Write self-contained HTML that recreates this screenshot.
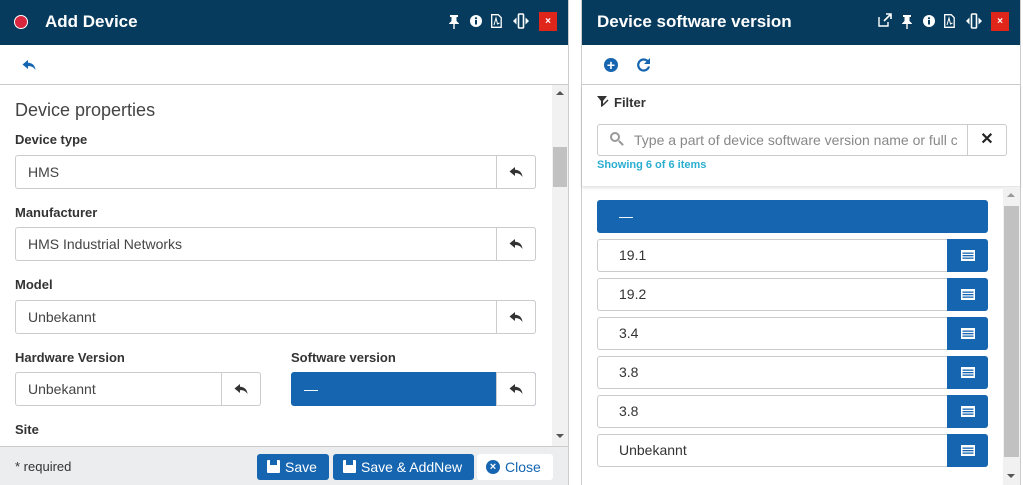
<!DOCTYPE html>
<html><head><meta charset="utf-8"><style>
*{box-sizing:border-box;margin:0;padding:0}
body{width:1023px;height:485px;overflow:hidden;background:#fff;font-family:"Liberation Sans",Arial,sans-serif;position:relative;color:#333}
.a{position:absolute}
.hdr{background:#063b5e;color:#fff;font-weight:bold;font-size:17px}
.lbl{position:absolute;font-size:13px;font-weight:bold;color:#333}
.inp{position:absolute;height:34px;border:1px solid #ccc;border-radius:3px;background:#fff;font-size:14px;color:#444;line-height:32px;padding-left:12px}
.btn{position:absolute;top:-1px;right:-1px;width:40px;height:34px;border:1px solid #ccc;border-radius:0 3px 3px 0;display:flex;align-items:center;justify-content:center;background:#fff}
.li{position:absolute;left:597px;width:391px;height:33px;border:1px solid #ccc;border-radius:3px;font-size:14px;line-height:31px;padding-left:21px;color:#333}
.lb{position:absolute;right:-1px;top:-1px;width:41px;height:33px;background:#1565b0;border-radius:0 3px 3px 0;display:flex;align-items:center;justify-content:center}
</style></head><body>
<svg width="0" height="0" style="position:absolute"><defs>
<symbol id="rep" viewBox="0 0 14 12"><path d="M6 1 L0.5 5.5 L6 10 L6 7.2 C9 7 11.5 8 13.5 11 C13 6.5 10.5 4 6 3.8 Z"/></symbol>
<symbol id="lst" viewBox="0 0 14 11"><rect x="0" y="0" width="14" height="11" fill="#fff"/><rect x="1.5" y="2.5" width="11" height="1.3" fill="#1565b0"/><rect x="1.5" y="5" width="11" height="1.3" fill="#1565b0"/><rect x="1.5" y="7.5" width="11" height="1.3" fill="#1565b0"/></symbol>
<symbol id="pin" viewBox="0 0 10 14"><path d="M1 0h8v2H7.5v4L10 8.5V9H5.7v5h-1.4V9H0v-.5L2.5 6V2H1z" fill="#fff"/></symbol>
<symbol id="info" viewBox="0 0 12 12"><circle cx="6" cy="6" r="6" fill="#fff"/><rect x="5" y="5" width="2" height="4.5" fill="#063b5e"/><circle cx="6" cy="3.2" r="1.1" fill="#063b5e"/></symbol>
<symbol id="pdf" viewBox="0 0 11 14"><path d="M.7.7h6.5l3 3v9.6H.7z" fill="none" stroke="#fff" stroke-width="1.3"/><path d="M3 11l2-7 1.5 6 2-1" fill="none" stroke="#fff" stroke-width="1"/></symbol>
<symbol id="rsz" viewBox="0 0 16 16"><rect x="5.5" y="1" width="5" height="14" rx="1" fill="none" stroke="#fff" stroke-width="1.6"/><path d="M0 8l3.5-3.5v7zM16 8l-3.5-3.5v7z" fill="#fff"/></symbol>
</defs></svg>

<!-- LEFT PANEL -->
<div class="a hdr" style="left:0;top:0;width:568px;height:45px">
 <div class="a" style="left:14px;top:15px;width:14px;height:14px;border-radius:50%;background:#d7263d;border:1.5px solid #fff"></div>
 <div class="a" style="left:45px;top:12px">Add Device</div>
 <svg class="a" style="left:449px;top:15px" width="10" height="14"><use href="#pin"/></svg>
 <svg class="a" style="left:470px;top:15px" width="12" height="12"><use href="#info"/></svg>
 <svg class="a" style="left:491px;top:14px" width="11" height="14"><use href="#pdf"/></svg>
 <svg class="a" style="left:513px;top:13px" width="16" height="16"><use href="#rsz"/></svg>
 <div class="a" style="left:539px;top:12px;width:18px;height:19px;background:#e0261b;font-size:10px;text-align:center;line-height:19px">×</div>
</div>
<div class="a" style="left:0;top:45px;width:568px;height:40px;border-bottom:1px solid #ccc">
 <svg class="a" style="left:22px;top:14px" width="14" height="12" fill="#1565b0"><use href="#rep"/></svg>
</div>
<div class="a" style="left:568px;top:0;width:1px;height:485px;background:#ccc"></div>
<div class="a" style="left:552px;top:85px;width:16px;height:361px;background:#f1f1f1">
 <div class="a" style="left:1px;top:62px;width:14px;height:40px;background:#c1c1c1"></div>
 <div class="a" style="left:4px;top:6px;border:4px solid transparent;border-bottom-color:#555;border-top:0"></div>
 <div class="a" style="left:4px;top:349px;border:4px solid transparent;border-top-color:#555;border-bottom:0"></div>
</div>
<div class="a" style="left:15px;top:100px;font-size:18px;color:#444">Device properties</div>
<div class="lbl" style="left:15px;top:132px">Device type</div>
<div class="inp" style="left:15px;top:155px;width:521px">HMS<div class="btn"><svg width="14" height="12" fill="#333"><use href="#rep"/></svg></div></div>
<div class="lbl" style="left:15px;top:205px">Manufacturer</div>
<div class="inp" style="left:15px;top:227px;width:521px">HMS Industrial Networks<div class="btn"><svg width="14" height="12" fill="#333"><use href="#rep"/></svg></div></div>
<div class="lbl" style="left:15px;top:277px">Model</div>
<div class="inp" style="left:15px;top:300px;width:521px">Unbekannt<div class="btn"><svg width="14" height="12" fill="#333"><use href="#rep"/></svg></div></div>
<div class="lbl" style="left:15px;top:350px">Hardware Version</div>
<div class="inp" style="left:15px;top:372px;width:246px">Unbekannt<div class="btn"><svg width="14" height="12" fill="#333"><use href="#rep"/></svg></div></div>
<div class="lbl" style="left:291px;top:350px">Software version</div>
<div class="inp" style="left:291px;top:372px;width:245px;background:#1565b0;color:#fff;border-color:#1565b0">—<div class="btn" style="border-color:#ccc"><svg width="14" height="12" fill="#333"><use href="#rep"/></svg></div></div>
<div class="lbl" style="left:15px;top:422px">Site</div>
<div class="a" style="left:0;top:446px;width:568px;height:39px;background:#ebedee;border-top:1px solid #ccc">
 <div class="a" style="left:15px;top:12px;font-size:13px;color:#333">* required</div>
 <div class="a" style="left:257px;top:7px;width:72px;height:26px;background:#1565b0;border-radius:3px;color:#fff;font-size:14px;line-height:26px;padding-left:28px">Save<div class="a" style="left:10px;top:6px;width:13px;height:13px;background:#fff;border-radius:1px"><div class="a" style="left:3px;top:0;width:7px;height:5px;background:#1565b0"></div></div></div>
 <div class="a" style="left:333px;top:7px;width:141px;height:26px;background:#1565b0;border-radius:3px;color:#fff;font-size:14px;line-height:26px;padding-left:28px">Save &amp; AddNew<div class="a" style="left:10px;top:6px;width:13px;height:13px;background:#fff;border-radius:1px"><div class="a" style="left:3px;top:0;width:7px;height:5px;background:#1565b0"></div></div></div>
 <div class="a" style="left:477px;top:7px;width:76px;height:26px;background:#fff;border-radius:3px;color:#1565b0;font-size:14px;line-height:26px;padding-left:28px">Close<div class="a" style="left:9px;top:6px;width:14px;height:14px;border-radius:50%;background:#1565b0;color:#fff;font-size:11px;line-height:14px;text-align:center;font-weight:bold;padding:0">×</div></div>
</div>

<!-- RIGHT PANEL -->
<div class="a" style="left:581px;top:0;width:1px;height:485px;background:#ccc"></div>
<div class="a" style="left:1020px;top:0;width:1px;height:485px;background:#ccc"></div>
<div class="a hdr" style="left:582px;top:0;width:438px;height:45px">
 <div class="a" style="left:15px;top:12px">Device software version</div>
 <svg class="a" style="left:296px;top:13px" width="14" height="14"><path d="M1 4v9h9V9" fill="none" stroke="#fff" stroke-width="1.4"/><path d="M6 8l6-6M8 1h5v5" fill="none" stroke="#fff" stroke-width="1.6"/></svg>
 <svg class="a" style="left:320px;top:15px" width="10" height="14"><use href="#pin"/></svg>
 <svg class="a" style="left:341px;top:15px" width="12" height="12"><use href="#info"/></svg>
 <svg class="a" style="left:362px;top:14px" width="11" height="14"><use href="#pdf"/></svg>
 <svg class="a" style="left:384px;top:13px" width="16" height="16"><use href="#rsz"/></svg>
 <div class="a" style="left:409px;top:12px;width:18px;height:19px;background:#e0261b;font-size:10px;text-align:center;line-height:19px">×</div>
</div>
<div class="a" style="left:582px;top:45px;width:438px;height:40px;border-bottom:1px solid #ccc">
 <div class="a" style="left:22px;top:13px;width:14px;height:14px;border-radius:50%;background:#1565b0;color:#fff;font-size:14px;font-weight:bold;line-height:14px;text-align:center">+</div>
 <svg class="a" style="left:54px;top:12px" width="16" height="16"><path d="M13 9.5A5.5 5.5 0 1 1 11.5 4" fill="none" stroke="#1565b0" stroke-width="2.2"/><path d="M14 1v6H8z" fill="#1565b0"/></svg>
</div>
<div class="a" style="left:582px;top:85px;width:438px;height:101px;box-shadow:0 2px 3px rgba(0,0,0,.12)">
 <svg class="a" style="left:15px;top:11px" width="12" height="12"><path d="M0 0h10L6 5v5L4 11V5z" fill="#333"/><path d="M6 9l5-5" stroke="#333" stroke-width="1.4"/></svg>
 <div class="a" style="left:32px;top:10px;font-size:13px;font-weight:bold;color:#333">Filter</div>
 <div class="a" style="left:15px;top:39px;width:410px;height:32px;border:1px solid #ccc;border-radius:3px;font-size:14px;color:#888;line-height:30px;padding-left:36px;overflow:hidden;white-space:nowrap">
  <div class="a" style="left:12px;top:7px;width:10px;height:10px;border:2px solid #999;border-radius:50%"></div>
  <div class="a" style="left:20px;top:17px;width:6px;height:2px;background:#999;transform:rotate(45deg)"></div>
  <span style="display:inline-block;width:323px;overflow:hidden">Type a part of device software version name or full c</span>
  <div class="a" style="right:-1px;top:-1px;width:40px;height:32px;border:1px solid #ccc;border-radius:0 3px 3px 0;color:#222;font-weight:bold;font-size:16px;text-align:center;line-height:30px;background:#fff">✕</div>
 </div>
 <div class="a" style="left:15px;top:74px;font-size:11px;font-weight:bold;color:#2aaed0">Showing 6 of 6 items</div>
</div>
<div class="a" style="left:1003px;top:187px;width:17px;height:298px;background:#f1f1f1">
 <div class="a" style="left:1px;top:19px;width:15px;height:251px;background:#c1c1c1"></div>
 <div class="a" style="left:4px;top:6px;border:4px solid transparent;border-bottom-color:#999;border-top:0"></div>
 <div class="a" style="left:4px;top:287px;border:4px solid transparent;border-top-color:#555;border-bottom:0"></div>
</div>
<div class="li" style="top:200px;background:#1565b0;border-color:#1565b0;color:#fff">—</div>
<div class="li" style="top:239px">19.1<div class="lb"><svg width="14" height="11"><use href="#lst"/></svg></div></div>
<div class="li" style="top:278px">19.2<div class="lb"><svg width="14" height="11"><use href="#lst"/></svg></div></div>
<div class="li" style="top:317px">3.4<div class="lb"><svg width="14" height="11"><use href="#lst"/></svg></div></div>
<div class="li" style="top:356px">3.8<div class="lb"><svg width="14" height="11"><use href="#lst"/></svg></div></div>
<div class="li" style="top:395px">3.8<div class="lb"><svg width="14" height="11"><use href="#lst"/></svg></div></div>
<div class="li" style="top:434px">Unbekannt<div class="lb"><svg width="14" height="11"><use href="#lst"/></svg></div></div>
</body></html>
